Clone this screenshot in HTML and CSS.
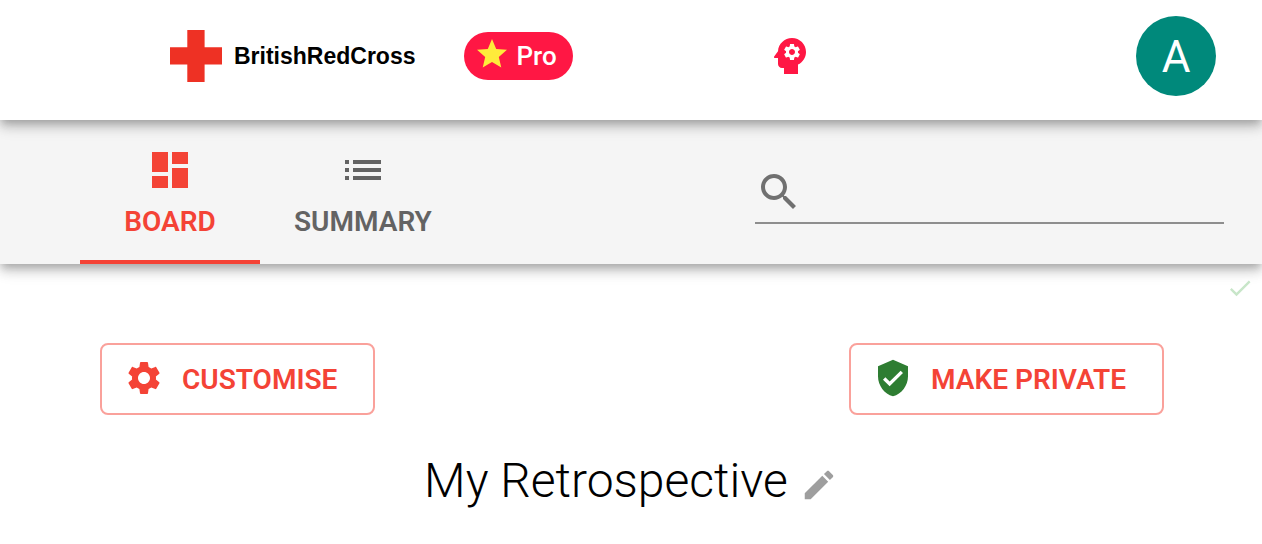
FILE: index.html
```html
<!DOCTYPE html>
<html lang="en-GB">
<head>
<meta charset="utf-8">
<meta name="viewport" content="width=device-width, initial-scale=1">
<title>My Retrospective</title>
<link rel="stylesheet" href="styles.css">
</head>
<body>
<header class="app-bar">
  <div class="brand">
    <a class="logo" href="#">
      <svg class="logo-cross" viewBox="0 0 52 52" aria-hidden="true"><path d="M17.300 0h17.300v17.300H52v17.300H34.600V52H17.300V34.600H0V17.300h17.300z"/></svg>
      <span>BritishRedCross</span>
    </a>
    <span class="pro-chip">
      <svg class="icon-36" viewBox="0 0 24 24" aria-hidden="true"><path d="M12 17.270 18.180 21l-1.640-7.030L22 9.240l-7.190-.61L12 2 9.190 8.630 2 9.240l5.460 4.730L5.820 21z"/></svg>
      <span>Pro</span>
    </span>
  </div>
  <button class="icon-button" type="button" aria-label="Assistant">
    <svg class="icon-48" viewBox="0 0 24 24" aria-hidden="true">
      <path fill="#ff1744" d="M13 3C9.230 3 6.190 5.950 6 9.660L4.080 12.190C3.840 12.500 4.080 13 4.500 13H6v3c0 1.110.89 2 2 2h1v3h7v-4.690c2.370-1.120 4-3.510 4-6.310 0-3.860-3.120-7-7-7z"/>
      <path fill="#fff" transform="translate(8 5) scale(.4167)" d="M19.140 12.940c.04-.3.060-.61.060-.94 0-.32-.02-.64-.07-.94l2.030-1.580c.18-.14.23-.41.120-.61l-1.920-3.320c-.12-.22-.37-.29-.59-.22l-2.390.96c-.5-.38-1.030-.7-1.620-.94l-.36-2.540c-.04-.24-.24-.41-.48-.41h-3.840c-.24 0-.43.170-.47.410l-.36 2.540c-.59.240-1.130.570-1.620.940l-2.390-.96c-.22-.08-.47 0-.59.220L2.740 8.870c-.12.210-.08.470.120.610l2.030 1.580c-.05.3-.09.630-.09.940s.020.640.070.940l-2.030 1.580c-.18.140-.23.410-.12.610l1.920 3.320c.12.220.37.290.59.220l2.390-.96c.5.380 1.030.7 1.620.940l.36 2.540c.05.240.24.410.48.410h3.840c.24 0 .44-.17.470-.41l.36-2.540c.59-.24 1.130-.56 1.620-.94l2.390.96c.22.080.47 0 .59-.22l1.920-3.320c.12-.22.070-.47-.12-.61l-2.010-1.580zM12 15.600c-1.980 0-3.600-1.620-3.600-3.600s1.620-3.600 3.600-3.600 3.600 1.620 3.600 3.600-1.620 3.600-3.600 3.600z"/>
    </svg>
  </button>
  <button class="avatar" type="button" aria-label="Account">A</button>
</header>

<div class="tool-bar">
  <nav class="tabs">
    <button class="tab tab-active" type="button">
      <svg class="icon-48" viewBox="0 0 24 24" aria-hidden="true"><path d="M3 13h8V3H3v10zm0 8h8v-6H3v6zm10 0h8V11h-8v10zm0-18v6h8V3h-8z"/></svg>
      <span>BOARD</span>
    </button>
    <button class="tab" type="button">
      <svg class="icon-48" viewBox="0 0 24 24" aria-hidden="true"><path d="M3 13h2v-2H3v2zm0 4h2v-2H3v2zm0-8h2V7H3v2zm4 4h14v-2H7v2zm0 4h14v-2H7v2zM7 7v2h14V7H7z"/></svg>
      <span>SUMMARY</span>
    </button>
  </nav>
  <label class="search">
    <svg class="icon-48" viewBox="0 0 24 24" aria-hidden="true"><path d="M15.500 14h-.79l-.28-.27C15.410 12.590 16 11.110 16 9.500 16 5.910 13.090 3 9.500 3S3 5.910 3 9.500 5.910 16 9.500 16c1.610 0 3.090-.59 4.230-1.570l.27.280v.79l5 4.990L20.490 19l-4.990-5zm-6 0C7.010 14 5 11.990 5 9.500S7.010 5 9.500 5 14 7.010 14 9.500 11.990 14 9.500 14z"/></svg>
    <input class="search-input" type="search" aria-label="Search">
  </label>
</div>

<main class="content">
  <div class="status">
    <svg class="icon-28" viewBox="0 0 24 24" role="img" aria-label="Saved"><path d="M9 16.170 4.830 12l-1.420 1.410L9 19 21 7l-1.410-1.410z"/></svg>
  </div>
  <div class="actions">
    <button class="action" type="button">
      <svg class="icon-40" viewBox="0 0 24 24" aria-hidden="true"><path d="M19.140 12.940c.04-.3.060-.61.060-.94 0-.32-.02-.64-.07-.94l2.030-1.580c.18-.14.23-.41.120-.61l-1.920-3.320c-.12-.22-.37-.29-.59-.22l-2.390.96c-.5-.38-1.030-.7-1.620-.94l-.36-2.540c-.04-.24-.24-.41-.48-.41h-3.840c-.24 0-.43.170-.47.410l-.36 2.540c-.59.240-1.130.570-1.620.940l-2.390-.96c-.22-.08-.47 0-.59.220L2.740 8.870c-.12.210-.08.470.120.610l2.030 1.580c-.05.3-.09.630-.09.940s.020.640.070.940l-2.030 1.580c-.18.140-.23.410-.12.610l1.920 3.320c.12.220.37.290.59.220l2.390-.96c.5.380 1.030.7 1.620.940l.36 2.540c.05.240.24.410.48.410h3.840c.24 0 .44-.17.470-.41l.36-2.540c.59-.24 1.130-.56 1.620-.94l2.390.96c.22.080.47 0 .59-.22l1.920-3.320c.12-.22.070-.47-.12-.61l-2.010-1.580zM12 15.600c-1.980 0-3.600-1.620-3.600-3.600s1.620-3.600 3.600-3.600 3.600 1.620 3.600 3.600-1.620 3.600-3.600 3.600z"/></svg>
      <span>CUSTOMISE</span>
    </button>
    <button class="action" type="button">
      <svg class="icon-40 shield" viewBox="0 0 24 24" aria-hidden="true"><path d="M12 1 3 5v6c0 5.550 3.840 10.740 9 12 5.160-1.260 9-6.450 9-12V5l-9-4zm-2 16-4-4 1.410-1.410L10 14.170l6.590-6.590L18 9l-8 8z"/></svg>
      <span>MAKE PRIVATE</span>
    </button>
  </div>
  <div class="title-row">
    <h1 class="title">My Retrospective</h1>
    <button class="edit" type="button" aria-label="Edit title">
      <svg class="icon-38" viewBox="0 0 24 24" aria-hidden="true"><path d="M3 17.250V21h3.750L17.810 9.940l-3.750-3.750L3 17.250zM20.710 7.040c.39-.39.390-1.020 0-1.410l-2.340-2.340c-.39-.39-1.020-.39-1.410 0l-1.830 1.830 3.750 3.750 1.830-1.830z"/></svg>
    </button>
  </div>
</main>
</body>
</html>
```
FILE: styles.css
```css
* {
  box-sizing: border-box;
}

body {
  margin: 0;
  background: #fff;
  color: #000;
  font-family: Roboto, "Liberation Sans", sans-serif;
}

button {
  padding: 0;
  border: 0;
  background: none;
  color: inherit;
  font: inherit;
  cursor: pointer;
}

svg {
  display: block;
  flex: none;
  fill: currentColor;
}

.icon-28 { width: 28px; height: 28px; }
.icon-36 { width: 36px; height: 36px; }
.icon-38 { width: 38px; height: 38px; }
.icon-40 { width: 40px; height: 40px; }
.icon-48 { width: 48px; height: 48px; }

.app-bar,
.tool-bar {
  position: relative;
  box-shadow:
    0 4px 8px -2px rgba(0, 0, 0, 0.2),
    0 8px 10px 0 rgba(0, 0, 0, 0.14),
    0 2px 20px 0 rgba(0, 0, 0, 0.12);
}

.app-bar {
  z-index: 2;
  display: grid;
  grid-template-columns: 596fr auto 402fr;
  align-items: center;
  padding: 16px 46px 24px 170px;
  background: #fff;
}

.brand {
  display: flex;
  align-items: center;
  gap: 49px;
}

.logo {
  display: flex;
  align-items: center;
  gap: 12px;
  color: #000;
  font: bold 23px/28px "Liberation Sans", sans-serif;
  text-decoration: none;
}

.logo-cross {
  width: 52px;
  height: 52px;
  fill: #ee3124;
}

.pro-chip {
  display: flex;
  align-items: center;
  gap: 6px;
  height: 48px;
  padding: 0 16px 0 10px;
  border-radius: 24px;
  background: #ff1744;
  color: #fff;
  font-size: 26px;
  font-weight: 500;
}

.pro-chip svg {
  margin-bottom: 4px;
  fill: #ffeb3b;
}

.avatar {
  justify-self: end;
  width: 80px;
  height: 80px;
  padding-top: 2px;
  border-radius: 50%;
  background: #00897b;
  color: #fff;
  font-size: 44px;
  line-height: 78px;
}

.tool-bar {
  z-index: 1;
  display: flex;
  align-items: center;
  justify-content: space-between;
  padding: 0 38px 0 80px;
  background: #f5f5f5;
}

.tabs {
  display: flex;
}

.tab {
  display: flex;
  flex-direction: column;
  align-items: center;
  gap: 10px;
  min-width: 180px;
  padding: 26px 34px 20px;
  border-bottom: 4px solid transparent;
  color: #636363;
  font-size: 28px;
  font-weight: 600;
  line-height: 36px;
}

.tab-active {
  border-bottom-color: #f44336;
  color: #f44336;
}

.search {
  display: flex;
  align-items: center;
  flex-basis: 468px;
  margin-top: 8px;
  padding-bottom: 6px;
  border-bottom: 2px solid #8e8e8e;
  color: #707070;
}

.search-input {
  flex: 1;
  min-width: 0;
  height: 48px;
  padding: 0 8px;
  border: 0;
  outline: 0;
  background: none;
  font: 32px/38px Roboto, sans-serif;
}

.status {
  display: flex;
  justify-content: flex-end;
  padding: 10px 8px 0;
  color: #c8e6c9;
}

.actions {
  display: flex;
  justify-content: space-between;
  padding: 41px 98px 0 100px;
}

.action {
  display: flex;
  align-items: center;
  gap: 18px;
  padding: 11px 36px 9px 22px;
  border: 2px solid #faa19b;
  border-radius: 8px;
  color: #f44336;
  font-size: 28px;
  font-weight: 600;
  line-height: 48px;
}

.action svg {
  margin-bottom: 4px;
}

.shield {
  fill: #2e7d32;
}

.title-row {
  display: flex;
  align-items: center;
  justify-content: center;
  gap: 12px;
  padding: 38px 0 32px;
}

.title {
  margin: 0;
  font-size: 48px;
  font-weight: 300;
  line-height: 56px;
}

.edit {
  padding-top: 8px;
  color: #9e9e9e;
}
```
